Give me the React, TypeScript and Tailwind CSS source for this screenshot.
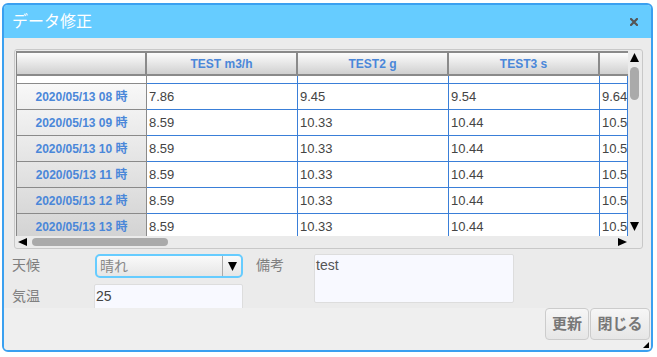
import React from "react";

const rows = [
  { label: "2020/05/13 08 時", v: ["7.86", "9.45", "9.54", "9.64"], bg: "bg-linear-to-b from-[#f8f8f8] to-[#f0f0f0]" },
  { label: "2020/05/13 09 時", v: ["8.59", "10.33", "10.44", "10.55"], bg: "bg-linear-to-b from-[#f2f2f2] to-[#eaeaea]" },
  { label: "2020/05/13 10 時", v: ["8.59", "10.33", "10.44", "10.55"], bg: "bg-linear-to-b from-[#ececec] to-[#e4e4e4]" },
  { label: "2020/05/13 11 時", v: ["8.59", "10.33", "10.44", "10.55"], bg: "bg-linear-to-b from-[#e6e6e6] to-[#dedede]" },
  { label: "2020/05/13 12 時", v: ["8.59", "10.33", "10.44", "10.55"], bg: "bg-linear-to-b from-[#e0e0e0] to-[#d8d8d8]" },
  { label: "2020/05/13 13 時", v: ["8.59", "10.33", "10.44", "10.55"], bg: "bg-linear-to-b from-[#dadada] to-[#d2d2d2]" },
];

const colW = ["w-[151px]", "w-[151px]", "w-[151px]", "flex-1"];

function Tri({ dir }: { dir: "up" | "down" | "left" | "right" }) {
  const pts =
    dir === "up"
      ? "0,9 4.5,0 9,9"
      : dir === "down"
      ? "0,0 9,0 4.5,9"
      : dir === "left"
      ? "9,0 9,8 0,4"
      : "0,0 0,8 9,4";
  const h = dir === "left" || dir === "right" ? 8 : 9;
  return (
    <svg width="9" height={h} viewBox={`0 0 9 ${h}`} className="block shrink-0">
      <polygon points={pts} fill="#000" />
    </svg>
  );
}

export default function App() {
  return (
    <div className="w-[657px] h-[357px] bg-white pt-[3px] pl-[2px] font-['Liberation_Sans','Noto_Sans_CJK_JP',sans-serif]">
      <div className="relative w-[651px] h-[349px] border-2 border-[#3aa0f0] rounded-[6px] overflow-hidden flex flex-col bg-[#ebebeb]">
        {/* title bar */}
        <div className="h-[33px] shrink-0 bg-[#66ccff] flex items-center justify-between pl-[8px] pr-[13px]">
          <span className="text-white text-[16px] leading-none">データ修正</span>
          <svg width="8" height="8" viewBox="0 0 8 8" className="block">
            <path d="M1 1 L7 7 M7 1 L1 7" stroke="#555" strokeWidth="2.2" strokeLinecap="square" />
          </svg>
        </div>

        {/* grid */}
        <div className="pt-[11px] pl-[10px] shrink-0">
          <div className="w-[629px] h-[200px] border border-[#c8c8c8] rounded-[3px] pt-[1px] pl-[1px] flex">
            <div className="w-[612px] flex flex-col">
              <div className="h-[185px] overflow-hidden border-l border-[#888] bg-white">
                {/* header */}
                <div className="flex h-[25px] border-t-2 border-b-2 border-[#8a8a8a] bg-linear-to-b from-[#fdfdfd] to-[#d0d0d0]">
                  <div className="w-[130px] shrink-0 border-r-2 border-[#8a8a8a]" />
                  {["TEST m3/h", "TEST2 g", "TEST3 s", ""].map((h, i) => (
                    <div
                      key={i}
                      className={`${colW[i]} shrink-0 ${i < 3 ? "border-r-2 border-[#8a8a8a]" : ""} flex items-center justify-center text-[12px] font-bold text-[#4a87d9] whitespace-nowrap overflow-hidden`}
                    >
                      {h}
                    </div>
                  ))}
                </div>
                {/* blank row */}
                <div className="flex h-[8px]">
                  <div className="w-[130px] shrink-0 border-r border-b border-[#8a8a8a] bg-white" />
                  {colW.map((w, i) => (
                    <div key={i} className={`${w} shrink-0 border-r border-b border-[#3a7fd8] bg-white`} />
                  ))}
                </div>
                {rows.map((r, ri) => (
                  <div key={ri} className="flex h-[26px]">
                    <div
                      className={`w-[130px] shrink-0 border-r border-b border-[#8a8a8a] ${r.bg} flex items-center justify-center text-[12px] font-bold text-[#4a87d9] whitespace-nowrap`}
                    >
                      {r.label}
                    </div>
                    {r.v.map((v, i) => (
                      <div
                        key={i}
                        className={`${colW[i]} shrink-0 border-r border-b border-[#3a7fd8] bg-white flex items-center pl-[2px] text-[13px] text-[#444] whitespace-nowrap overflow-hidden`}
                      >
                        {v}
                      </div>
                    ))}
                  </div>
                ))}
              </div>
              {/* horizontal scrollbar */}
              <div className="h-[11px] flex items-center pl-[2px] pr-[1px]">
                <Tri dir="left" />
                <div className="ml-[5px] w-[136px] h-[8px] rounded-full bg-[#aaaaaa]" />
                <div className="flex-1" />
                <Tri dir="right" />
              </div>
            </div>
            {/* vertical scrollbar */}
            <div className="w-[13px] h-[185px] flex flex-col items-center pt-[2px] pb-[5px]">
              <Tri dir="up" />
              <div className="mt-[5px] w-[9px] h-[33px] rounded-full bg-[#aaaaaa]" />
              <div className="flex-1" />
              <Tri dir="down" />
            </div>
          </div>
        </div>

        {/* form */}
        <div className="h-[59px] shrink-0 overflow-hidden pt-[5px] pl-[8px] flex text-[14px]">
          <div className="flex flex-col gap-[6px]">
            <div className="flex h-[24px]">
              <div className="w-[83px] text-[#808080] leading-[22px]">天候</div>
              <div className="w-[148px] h-[24px] border-2 border-[#66ccff] rounded-[5px] bg-linear-to-b from-[#fafafa] to-[#e6e6e6] flex items-center">
                <span className="flex-1 pl-[3px] text-[#888] leading-none">晴れ</span>
                <div className="w-[19px] h-full border-l border-[#aaa] flex items-center justify-center">
                  <Tri dir="down" />
                </div>
              </div>
            </div>
            <div className="flex">
              <div className="w-[82px] text-[#808080] leading-[22px] pt-[1px]">気温</div>
              <div className="w-[149px] h-[28px] border border-[#ddd] rounded-[2px] bg-[#f8f9ff] text-[#444] pt-[2px] pl-[1px] leading-[18px]">
                25
              </div>
            </div>
          </div>
          <div className="ml-[13px] w-[58px] text-[#808080] leading-[22px]">備考</div>
          <div className="w-[200px] h-[49px] border border-[#ddd] rounded-[2px] bg-[#f8f9ff] text-[#555] pl-[1px] pt-[1px] leading-[18px]">
            test
          </div>
        </div>

        {/* buttons */}
        <div className="flex-1 bg-[#efefef] flex justify-end items-start pr-[1px] gap-[1px]">
          <button className="w-[44px] h-[32px] border border-[#ccc] rounded-[4px] bg-linear-to-b from-[#f6f6f6] to-[#e6e6e6] text-[15px] font-bold text-[#777]">
            更新
          </button>
          <button className="w-[60px] h-[32px] border border-[#ccc] rounded-[4px] bg-linear-to-b from-[#f6f6f6] to-[#e6e6e6] text-[15px] font-bold text-[#777]">
            閉じる
          </button>
        </div>

        <svg width="6" height="6" viewBox="0 0 6 6" className="absolute right-[2px] bottom-[2px] block">
          <polygon points="6,0 6,6 0,6" fill="#000" />
        </svg>
      </div>
    </div>
  );
}
